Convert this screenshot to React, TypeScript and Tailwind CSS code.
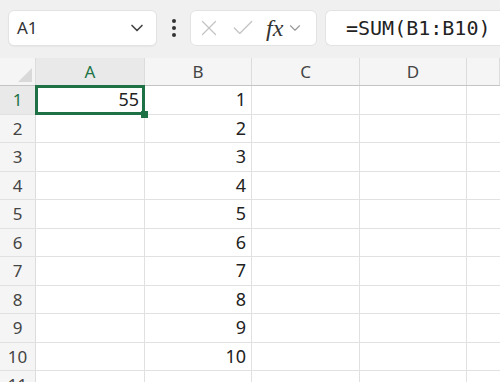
import { ChevronDown, X, Check } from "lucide-react";

const COLS = ["A", "B", "C", "D", ""];
const ROWS = [1, 2, 3, 4, 5, 6, 7, 8, 9, 10, 11];

function NameBox() {
  return (
    <div className="flex h-[36px] w-[149px] items-center justify-between rounded-md border border-[#e3e3e3] bg-white pl-[8px] pr-[9px] shadow-[0_1px_1px_rgba(0,0,0,0.04)]">
      <span className="text-[17px] text-[#333]">A1</span>
      <ChevronDown className="h-[20px] w-[20px] text-[#444]" strokeWidth={2} />
    </div>
  );
}

function FormulaButtons() {
  return (
    <div className="flex h-[36px] w-[127px] items-center rounded-md border border-[#e3e3e3] bg-white pl-[5px]">
      <X className="h-[26px] w-[26px] text-[#c4c4c4]" strokeWidth={1.2} />
      <Check className="ml-[8px] h-[26px] w-[26px] text-[#c4c4c4]" strokeWidth={1.2} />
      <span className="ml-[10px] font-['Liberation_Serif',serif] text-[24px] italic leading-none text-[#333]">
        fx
      </span>
      <ChevronDown className="ml-[3px] h-[18px] w-[18px] text-[#999]" strokeWidth={1.5} />
    </div>
  );
}

export default function App() {
  return (
    <div className="h-[382px] w-[500px] overflow-hidden bg-white font-['Noto_Sans',sans-serif]">
      {/* toolbar */}
      <div className="flex h-[58px] items-start bg-[#f0f0f0] pl-[8px] pt-[10px]">
        <NameBox />
        <div className="flex h-[36px] w-[33px] flex-col items-center justify-center gap-[3px]">
          <span className="h-[4px] w-[4px] rounded-full bg-[#333]" />
          <span className="h-[4px] w-[4px] rounded-full bg-[#333]" />
          <span className="h-[4px] w-[4px] rounded-full bg-[#333]" />
        </div>
        <FormulaButtons />
        <div className="ml-[8px] flex h-[36px] flex-1 items-center rounded-l-md border border-r-0 border-[#e3e3e3] bg-white pl-[20px]">
          <span className="font-['DejaVu_Sans_Mono',monospace] text-[20px] text-[#222]">=SUM(B1:B10)</span>
        </div>
      </div>

      {/* column headers */}
      <div className="grid h-[28px] grid-cols-[36px_109px_107px_108px_107px_1fr] border-b border-[#c4c4c4] bg-[#f5f5f5]">
        <div className="relative border-r border-[#dcdcdc]">
          <div className="absolute bottom-[3px] right-[3px] h-0 w-0 border-b-[14px] border-l-[14px] border-b-[#d9d9d9] border-l-transparent" />
        </div>
        {COLS.map((c, i) => (
          <div
            key={i}
            className={`flex items-center justify-center border-r border-[#dcdcdc] text-[17px] ${
              c === "A" ? "bg-[#e9e9e9] text-[#217346]" : "text-[#444]"
            }`}
          >
            {c}
          </div>
        ))}
      </div>

      {/* rows */}
      {ROWS.map((r) => (
        <div key={r} className="grid h-[28.5px] grid-cols-[36px_109px_107px_108px_107px_1fr] border-b border-[#e1e1e1]">
          <div
            className={`flex items-center justify-center border-r border-[#dcdcdc] text-[17px] ${
              r === 1 ? "bg-[#e9e9e9] text-[#217346]" : "bg-[#f5f5f5] text-[#444]"
            }`}
          >
            {r}
          </div>
          <div className="relative flex items-center justify-end border-r border-[#e1e1e1] pr-[5px] text-[18px] text-[#222]">
            {r === 1 && (
              <>
                <span>55</span>
                <div className="absolute -left-[1px] -top-[1px] bottom-[-1px] right-[-1px] z-10 border-[3px] border-[#1e7145]" />
                <div className="absolute -bottom-[4px] -right-[4px] z-20 h-[7px] w-[7px] bg-[#1e7145]" />
              </>
            )}
          </div>
          <div className="flex items-center justify-end border-r border-[#e1e1e1] pr-[5px] text-[18px] text-[#222]">
            {r <= 10 ? r : ""}
          </div>
          <div className="border-r border-[#e1e1e1]" />
          <div className="border-r border-[#e1e1e1]" />
          <div />
        </div>
      ))}
    </div>
  );
}
